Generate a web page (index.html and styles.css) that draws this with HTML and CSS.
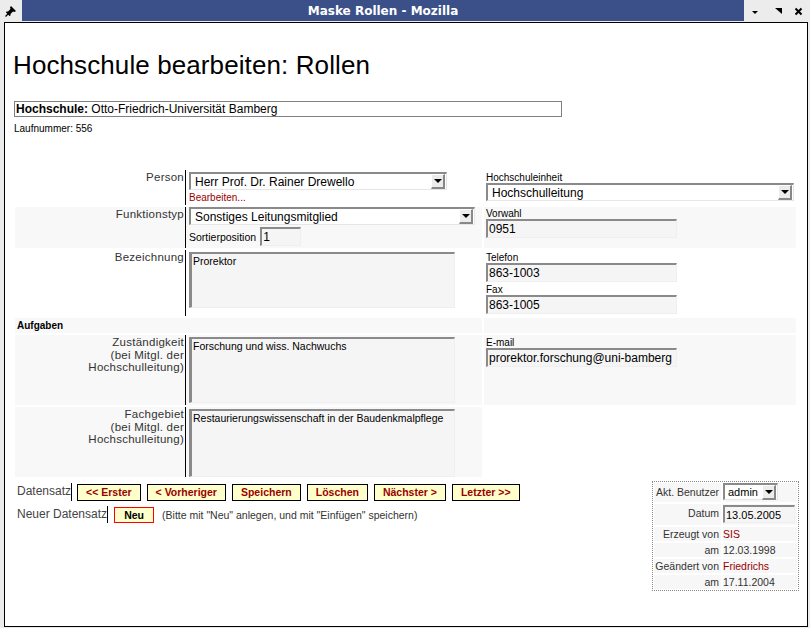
FILE: index.html
```html
<!DOCTYPE html>
<html lang="de">
<head>
    <meta charset="UTF-8">
    <title>Maske Rollen - Mozilla</title>
    <link rel="stylesheet" href="styles.css">
</head>
<body>

<div class="window">
    <div class="titlebar">
        <div class="tb-pin">
            <svg width="12" height="12" viewBox="0 0 12 12">
                <path d="M6 1 L11 6 L9.5 7 L8 6.5 L5.5 9 L5.5 10.5 L4.5 11 L1 7.5 L1.5 6.5 L3 6.5 L5.5 4 L5 2.5 Z" fill="#000"/>
                <path d="M3 9 L0.5 11.5" stroke="#000" stroke-width="1.2"/>
            </svg>
        </div>
        <div class="tb-title">Maske Rollen - Mozilla</div>
        <div class="tb-btns">
            <svg width="68" height="22" viewBox="0 0 68 22">
                <path d="M8 11 L14 11 L11 14 Z" fill="#000"/>
                <path d="M31 8 L38 8 L38 14 Z" fill="#000"/>
                <path d="M51.5 8.5 L57.5 14.5 M57.5 8.5 L51.5 14.5" stroke="#000" stroke-width="2"/>
            </svg>
        </div>
    </div>

    <div class="viewport">
        <div class="page">
            <h1>Hochschule bearbeiten: Rollen</h1>
            <div class="hs-box"><b>Hochschule:</b> Otto-Friedrich-Universität Bamberg</div>
            <div class="laufnr">Laufnummer: 556</div>

            <div class="maske">
                <!-- Person -->
                <div class="lbl">Person</div>
                <div class="fld">
                    <div class="sel sel-person"><span>Herr Prof. Dr. Rainer Drewello</span><i class="arr"></i></div>
                    <a class="link" href="#">Bearbeiten...</a>
                </div>
                <div class="rt">
                    <div class="small">Hochschuleinheit</div>
                    <div class="sel sel-einheit"><span>Hochschulleitung</span><i class="arr"></i></div>
                </div>

                <!-- Funktionstyp -->
                <div class="lbl grey">Funktionstyp</div>
                <div class="fld grey f-typ">
                    <div class="sel sel-typ"><span>Sonstiges Leitungsmitglied</span><i class="arr"></i></div>
                    <div class="sortpos">
                        <span>Sortierposition</span>
                        <input class="inp inp-sort" type="text" value="1">
                    </div>
                </div>
                <div class="rt grey r-vorwahl">
                    <div class="small">Vorwahl</div>
                    <input class="inp inp-tel" type="text" value="0951">
                </div>

                <!-- Bezeichnung -->
                <div class="lbl">Bezeichnung</div>
                <div class="fld">
                    <textarea class="ta ta-bez">Prorektor</textarea>
                </div>
                <div class="rt r-tel">
                    <div class="small">Telefon</div>
                    <input class="inp inp-tel" type="text" value="863-1003">
                    <div class="small">Fax</div>
                    <input class="inp inp-tel" type="text" value="863-1005">
                </div>

                <!-- Aufgaben -->
                <div class="head grey">Aufgaben</div>
                <div class="rt grey"></div>

                <div class="lbl grey">Zuständigkeit<br>(bei Mitgl. der<br>Hochschulleitung)</div>
                <div class="fld grey">
                    <textarea class="ta ta-big">Forschung und wiss. Nachwuchs</textarea>
                </div>
                <div class="rt grey r-mail">
                    <div class="small">E-mail</div>
                    <input class="inp inp-tel" type="text" value="prorektor.forschung@uni-bamberg">
                </div>

                <div class="lbl grey">Fachgebiet<br>(bei Mitgl. der<br>Hochschulleitung)</div>
                <div class="fld grey">
                    <textarea class="ta ta-big ta-fach">Restaurierungswissenschaft in der Baudenkmalpflege</textarea>
                </div>
                <div class="rt"></div>
            </div>

            <div class="bottom">
                <div class="nav">
                    <div class="nav-row">
                        <span class="nav-lbl">Datensatz</span>
                        <button class="btn">&lt;&lt; Erster</button>
                        <button class="btn">&lt; Vorheriger</button>
                        <button class="btn">Speichern</button>
                        <button class="btn">Löschen</button>
                        <button class="btn">Nächster &gt;</button>
                        <button class="btn">Letzter &gt;&gt;</button>
                    </div>
                    <div class="nav-row row-neu">
                        <span class="nav-lbl">Neuer Datensatz</span>
                        <button class="btn btn-neu">Neu</button>
                        <span class="hint">(Bitte mit "Neu" anlegen, und mit "Einfügen" speichern)</span>
                    </div>
                </div>

                <div class="info">
                    <div class="i-lbl">Akt. Benutzer</div>
                    <div class="i-val"><div class="sel sel-admin"><span>admin</span><i class="arr"></i></div></div>
                    <div class="i-lbl">Datum</div>
                    <div class="i-val"><input class="inp inp-datum" type="text" value="13.05.2005"></div>
                    <div class="i-lbl">Erzeugt von</div>
                    <div class="i-val red">SIS</div>
                    <div class="i-lbl">am</div>
                    <div class="i-val">12.03.1998</div>
                    <div class="i-lbl">Geändert von</div>
                    <div class="i-val red">Friedrichs</div>
                    <div class="i-lbl">am</div>
                    <div class="i-val">17.11.2004</div>
                </div>
            </div>
        </div>
    </div>
</div>

</body>
</html>
```

FILE: styles.css
```css
body {
    margin: 0;
    font-family: "Liberation Sans", Arial, sans-serif;
    background-color: #ececec;
    color: #333;
}
.window {
    width: 810px;
    height: 628px;
    display: flex;
    flex-direction: column;
    background-color: #ececec;
}

/* Fensterleiste */
.titlebar {
    height: 22px;
    display: flex;
}
.tb-pin {
    width: 22px;
    height: 21px;
    display: flex;
    align-items: center;
    justify-content: center;
}
.tb-title {
    flex: 1;
    height: 21px;
    background-color: #3b5088;
    color: #fff;
    font: bold 12px "DejaVu Sans", sans-serif;
    line-height: 22px;
    text-align: center;
}
.tb-btns {
    width: 66px;
    height: 21px;
}
.tb-btns svg {
    display: block;
}
.viewport {
    flex: 1;
    margin: 0 2px 1px 4px;
    border: 1px solid #000;
    background-color: #fff;
}
.page {
    padding: 0 8px;
}

h1 {
    margin: 27px 0 0;
    font-size: 26px;
    letter-spacing: 0.1px;
    line-height: 30px;
    font-weight: normal;
    color: #000;
}
.hs-box {
    margin: 21px 0 0 1px;
    width: 545px;
    height: 14px;
    padding-left: 1px;
    border: 1px solid #808080;
    font-size: 12px;
    line-height: 14px;
    color: #000;
}
.laufnr {
    margin: 6px 0 0 1px;
    font-size: 10px;
    line-height: 12px;
    color: #000;
}

/* Formular */
.maske {
    margin: 35px 0 0 2px;
    display: grid;
    grid-template-columns: 170px 297px 314px;
    grid-template-rows: 35px 41px 66px 15px 70px 70px;
    row-gap: 2px;
}
.grey {
    background-color: #f8f8f8;
}
.lbl {
    text-align: right;
    padding: 1px 1px 0 0;
    font-size: 11.5px;
    letter-spacing: 0.25px;
    line-height: 12.5px;
    color: #333;
}
.fld {
    border-left: 1px solid #000;
    padding: 2px 0 0 3px;
}
.f-typ {
    padding-top: 0;
}
.rt {
    margin-left: 2px;
    padding: 3px 0 0 2px;
}
.r-vorwahl {
    padding-top: 2px;
}
.r-tel, .r-mail {
    padding-top: 3px;
}
.head {
    grid-column: 1 / 3;
    padding-left: 2px;
    font-size: 10px;
    font-weight: bold;
    line-height: 15px;
    color: #000;
}
.small {
    font-size: 10px;
    line-height: 10px;
    color: #000;
}
.r-tel .small + .inp {
    margin-bottom: 3px;
}

.link {
    display: block;
    margin-top: 2px;
    font-size: 10px;
    line-height: 12px;
    color: #990000;
    text-decoration: none;
}

/* Auswahlfelder */
.sel {
    display: flex;
    align-items: center;
    justify-content: space-between;
    box-sizing: border-box;
    height: 18px;
    padding-left: 4px;
    border-top: 2px solid #8a8a8a;
    border-left: 2px solid #8a8a8a;
    border-right: 1px solid #e6e6e6;
    border-bottom: 1px solid #e6e6e6;
    background-color: #fff;
    font-size: 12px;
    line-height: 14px;
    color: #000;
}
.sel-person { width: 258px; }
.sel-typ { width: 286px; }
.sel-einheit { width: 308px; }
.sel-admin {
    width: 55px;
    height: 17px;
    padding-left: 3px;
    font-size: 11px;
}
.arr {
    position: relative;
    width: 11px;
    height: 12px;
    margin-right: 1px;
    border-top: 1px solid #fff;
    border-left: 1px solid #fff;
    border-right: 2px solid #888;
    border-bottom: 2px solid #888;
    background-color: #ececec;
}
.arr::after {
    content: "";
    position: absolute;
    left: 2px;
    top: 4px;
    border-left: 4px solid transparent;
    border-right: 4px solid transparent;
    border-top: 4px solid #000;
}

/* Eingabefelder */
.inp {
    display: block;
    box-sizing: border-box;
    height: 19px;
    margin: 0;
    padding: 0 1px;
    border-top: 2px solid #8a8a8a;
    border-left: 2px solid #8a8a8a;
    border-right: 1px solid #efefef;
    border-bottom: 1px solid #efefef;
    background-color: #f5f5f5;
    font-family: "Liberation Sans", Arial, sans-serif;
    font-size: 12px;
    color: #000;
    outline: none;
}
.inp-tel { width: 191px; }
.inp-sort { width: 41px; }
.inp-datum {
    width: 72px;
    height: 18px;
    margin-top: 1px;
    font-size: 11px;
}
.sortpos {
    display: flex;
    align-items: center;
    gap: 4px;
    margin-top: 2px;
    font-size: 10.5px;
    color: #000;
}
.ta {
    display: block;
    box-sizing: border-box;
    width: 266px;
    height: 56px;
    margin: 0;
    padding: 1px 1px;
    border-top: 2px solid #8a8a8a;
    border-left: 3px solid #8a8a8a;
    border-right: 1px solid #efefef;
    border-bottom: 1px solid #efefef;
    background-color: #f5f5f5;
    font-family: "Liberation Sans", Arial, sans-serif;
    font-size: 10.5px;
    line-height: 12px;
    color: #000;
    resize: none;
    overflow: hidden;
}
.ta-big { height: 66px; }
.ta-fach { height: 68px; }

/* Untere Leiste */
.bottom {
    display: flex;
    justify-content: space-between;
    margin-top: 4px;
}
.nav {
    padding: 2px 0 0 4px;
}
.nav-row {
    display: flex;
    align-items: center;
    gap: 6px;
    height: 18px;
}
.row-neu {
    gap: 0;
    margin-top: 5px;
    height: 17px;
}
.nav-lbl {
    align-self: stretch;
    border-right: 1px solid #000;
    font-size: 12px;
    line-height: 16px;
    color: #444;
}
.nav-lbl + .btn {
    margin-left: -1px;
}
.btn {
    height: 17px;
    margin: 0;
    padding: 0 8px;
    border: 1px solid #000;
    background-color: #ffffcc;
    font-family: "Liberation Sans", Arial, sans-serif;
    font-size: 10.5px;
    font-weight: bold;
    color: #990000;
}
.row-neu .btn-neu {
    width: 40px;
    height: 16px;
    margin-left: 6px;
    padding: 0;
    border-color: #ff0000;
    color: #000;
}
.hint {
    margin-left: 8px;
    font-size: 10.5px;
    color: #333;
}

.info {
    display: grid;
    grid-template-columns: 67px 74px;
    grid-template-rows: 19px 21px 14px 14px 14px 14px;
    gap: 2px;
    padding: 1px;
    border: 1px dotted #888;
    font-size: 10.5px;
    line-height: 14px;
}
.i-lbl {
    text-align: right;
    padding: 2px 2px 0 0;
    background-color: #f7f7f7;
    color: #333;
}
.i-lbl:nth-child(n+5) {
    padding-top: 0;
}
.i-val {
    background-color: #f7f7f7;
    color: #333;
}
.red {
    color: #990000;
}
```
